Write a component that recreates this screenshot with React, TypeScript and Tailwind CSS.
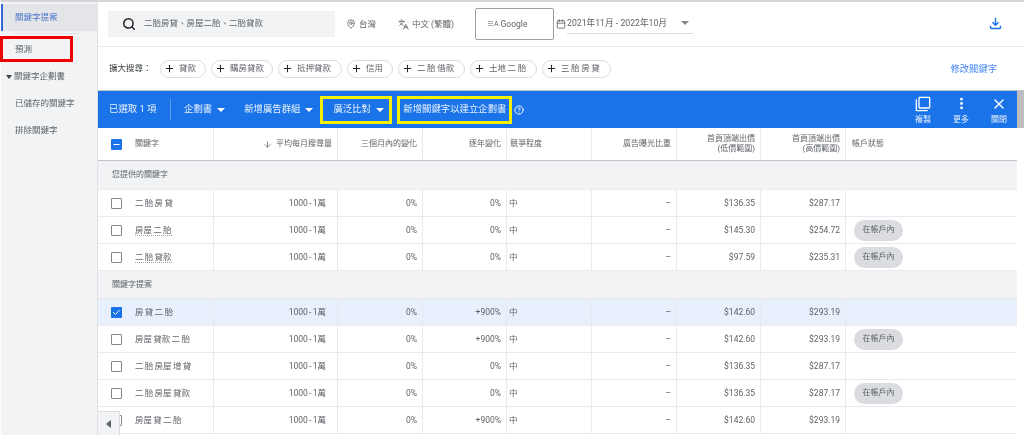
import { Search, MapPin, Languages, Calendar, Plus, ArrowDown, Check, Minus, CircleHelp, MoreVertical, X } from "lucide-react";

const cols = "grid grid-cols-[116px_124px_85px_84px_85px_85px_84px_85px_171px]";

type Row = { k: string; y: string; lo: string; hi: string; acct?: boolean; sel?: boolean; u?: boolean };

const group1: Row[] = [
  { k: "二 胎 房 貸", y: "0%", lo: "$136.35", hi: "$287.17" },
  { k: "房屋 二 胎", y: "0%", lo: "$145.30", hi: "$254.72", acct: true, u: true },
  { k: "二 胎 貸款", y: "0%", lo: "$97.59", hi: "$235.31", acct: true, u: true },
];
const group2: Row[] = [
  { k: "房 貸 二 胎", y: "+900%", lo: "$142.60", hi: "$293.19", sel: true },
  { k: "房屋 貸款 二 胎", y: "+900%", lo: "$142.60", hi: "$293.19", acct: true },
  { k: "二 胎 房屋 增 貸", y: "0%", lo: "$136.35", hi: "$287.17" },
  { k: "二 胎 房屋 貸款", y: "0%", lo: "$136.35", hi: "$287.17", acct: true },
  { k: "房屋 貸 二 胎", y: "+900%", lo: "$142.60", hi: "$293.19" },
];

const chips = [
  ["貸款", "w-[46px]"],
  ["購房貸款", "w-[62px]"],
  ["抵押貸款", "w-[64px]"],
  ["信用", "w-[46px]"],
  ["二 胎 借款", "w-[67px]"],
  ["土地 二 胎", "w-[67px]"],
  ["三 胎 房 貸", "w-[69px]"],
];

function Caret() {
  return <span className="w-0 h-0 border-x-[4px] border-x-transparent border-t-[4px] border-t-white ml-[5px]" />;
}

function Cell({ children, left }: { children?: React.ReactNode; left?: boolean }) {
  return (
    <div className={`h-full flex items-center border-r border-[#e8eaed] pr-[5px] ${left ? "justify-start pl-[2px]" : "justify-end"}`}>
      {children}
    </div>
  );
}

function DataRow({ r }: { r: Row }) {
  return (
    <div className={`${cols} h-[27px] border-b border-[#e8eaed] text-[8.5px] text-[#5f6368] items-center [word-spacing:-0.8px] ${r.sel ? "bg-[#e8f0fe]" : "bg-white"}`}>
      <div className="h-full flex items-center border-r border-[#e8eaed] pl-[13px]">
        {r.sel ? (
          <span className="w-[11px] h-[11px] rounded-[1px] bg-[#1a73e8] flex items-center justify-center">
            <Check size={9} strokeWidth={2.5} className="text-white" />
          </span>
        ) : (
          <span className="w-[11px] h-[11px] rounded-[1px] border-[1.5px] border-[#80868b]" />
        )}
        <span className={`ml-[13px] whitespace-nowrap ${r.u ? "border-b border-dotted border-[#9aa0a6] leading-[10px]" : ""}`}>{r.k}</span>
      </div>
      <div className="h-full flex items-center justify-end border-r border-[#e8eaed] pr-[11px]">1000 - 1萬</div>
      <Cell>0%</Cell>
      <Cell>{r.y}</Cell>
      <Cell left>中</Cell>
      <Cell>–</Cell>
      <Cell>{r.lo}</Cell>
      <Cell>{r.hi}</Cell>
      <div className="h-full flex items-center pl-[8px]">
        {r.acct && (
          <span className="h-[21px] w-[49px] rounded-full bg-[#dadce0] flex items-center justify-center text-[8px] text-[#5f6368]">在帳戶內</span>
        )}
      </div>
    </div>
  );
}

function Section({ t, h }: { t: string; h: string }) {
  return (
    <div className={`${h} bg-[#f1f3f4] border-b border-[#e8eaed] flex items-center pl-[14px] text-[8px] text-[#5f6368]`}>{t}</div>
  );
}

function Head({ children, left }: { children: React.ReactNode; left?: boolean }) {
  return (
    <div className={`h-full flex items-center border-r border-[#e8eaed] pr-[5px] leading-[10px] ${left ? "justify-start pl-[3px]" : "justify-end text-right"}`}>
      {children}
    </div>
  );
}

function Action({ icon, label }: { icon: React.ReactNode; label: string }) {
  return (
    <div className="w-[38px] flex flex-col items-center text-white">
      <div className="h-[18px] flex items-center justify-center">{icon}</div>
      <span className="text-[8px] mt-[2px] leading-[10px] opacity-90">{label}</span>
    </div>
  );
}

export default function App() {
  return (
    <div className="w-[1024px] h-[435px] overflow-hidden bg-white flex blur-[0.45px] font-['Roboto','Noto_Sans_CJK_TC',sans-serif]">
      <aside className="w-[98px] shrink-0 h-full bg-[#f1f3f4] border-l border-l-white border-r border-r-[#e0e2e5] border-t-[2px] border-t-[#d4d5d7] pt-[2px] text-[8.5px] text-[#5f6368]">
        <div className="h-[27px] bg-[#e3e5e8] border-l-[2px] border-[#3367d6] flex items-center pl-[12px] text-[#4a76c8]">關鍵字提案</div>
        <div className="mt-[2px] ml-[12px] mr-[16px] h-px bg-[#e3e5e8]" />
        <div className="mt-[2px] -ml-px w-[73px] h-[26px] border-[3px] border-[#f00000] flex items-center pl-[12px]">預測</div>
        <div className="mt-[1px] h-[27px] flex items-center pl-[5px]">
          <span className="w-0 h-0 border-x-[3.5px] border-x-transparent border-t-[4px] border-t-[#3c4043] mr-[2px]" />
          關鍵字企劃書
        </div>
        <div className="h-[27px] flex items-center pl-[14px]">已儲存的關鍵字</div>
        <div className="h-[26px] flex items-center pl-[14px]">排除關鍵字</div>
      </aside>

      <main className="flex-1 min-w-0 relative flex flex-col">
        <div className="h-[47px] border-t-[2px] border-t-[#d4d5d7] border-b border-b-[#e8eaed] flex items-center pl-[10px] text-[8.5px] text-[#5f6368]">
          <div className="w-[227px] h-[26px] bg-[#f1f3f4] flex items-center pl-[14px] -mt-px">
            <Search size={14} strokeWidth={2.5} className="text-[#202124]" />
            <span className="ml-[8px]">二胎房貸、房屋二胎、二胎貸款</span>
          </div>
          <MapPin size={10} className="ml-[11px]" />
          <span className="ml-[3px]">台灣</span>
          <Languages size={11} className="ml-[22px]" />
          <span className="ml-[3px]">中文 (繁體)</span>
          <div className="ml-[21px] w-[79px] h-[32px] border border-[#9aa0a6] rounded-[2px] flex items-center pl-[11px]">
            <span className="text-[7px] mr-[2px]">≡A</span>Google
          </div>
          <Calendar size={10} className="ml-[2px]" />
          <div className="ml-[1px] w-[126px] h-[20px] border-b border-[#dadce0] flex items-center relative">
            <span className="text-[8.7px]">2021年11月 - 2022年10月</span>
            <span className="absolute right-[4px] top-[7px] w-0 h-0 border-x-[4px] border-x-transparent border-t-[4px] border-t-[#80868b]" />
          </div>
          <svg viewBox="0 0 24 24" className="ml-[294px] -mt-[1px] w-[17px] h-[17px] fill-[#1a73e8]">
            <path d="M18 15v3H6v-3H4v3c0 1.1.9 2 2 2h12c1.1 0 2-.9 2-2v-3h-2zm-1-4l-1.41-1.41L13 12.17V4h-2v8.17L8.41 9.59 7 11l5 5 5-5z" />
          </svg>
        </div>

        <div className="h-[43px] flex items-center pl-[11px] pr-[27px] text-[8.5px] text-[#5f6368] [word-spacing:-0.5px]">
          <span className="w-[51px] text-[#3c4043]">擴大搜尋：</span>
          <div className="flex gap-[5px]">
            {chips.map(([t, w]) => (
              <span key={t} className={`${w} h-[18px] rounded-full border border-[#dadce0] flex items-center pl-[2.5px] whitespace-nowrap`}>
                <Plus size={11} strokeWidth={2.2} className="text-[#202124] mr-[4.5px] shrink-0" />
                {t}
              </span>
            ))}
          </div>
          <span className="ml-auto text-[9.3px] text-[#4285f4]">修改關鍵字</span>
        </div>

        <div className="flex h-[38px] border-t border-[#c5c7ca]">
          <div className="w-[919px] bg-[#1a73e8] flex items-center pl-[11px] text-[9.4px] text-white/90">
            <span className="w-[61px] whitespace-nowrap">已選取 1 項</span>
            <span className="w-px h-[21px] bg-white/30" />
            <span className="ml-[13px]">企劃書</span>
            <Caret />
            <span className="ml-[19px]">新增廣告群組</span>
            <Caret />
            <div className="ml-[7px] w-[72px] h-[28px] border-[3px] border-[#f4f000] flex items-center pl-[10px] shrink-0">
              廣泛比對
              <Caret />
            </div>
            <div className="ml-[5px] w-[115px] h-[28px] border-[3px] border-[#f4f000] flex items-center justify-center whitespace-nowrap shrink-0">新增關鍵字以建立企劃書</div>
            <CircleHelp size={10} strokeWidth={2.4} className="ml-[2px]" />
            <div className="ml-auto -mr-px flex">
              <Action
                icon={
                  <svg viewBox="0 0 24 24" className="w-[16px] h-[16px] fill-white">
                    <path d="M3 5H1v16c0 1.1.9 2 2 2h16v-2H3V5zm18-4H7c-1.1 0-2 .9-2 2v14c0 1.1.9 2 2 2h14c1.1 0 2-.9 2-2V3c0-1.1-.9-2-2-2zm0 16H7V3h14v14z" />
                  </svg>
                }
                label="複製"
              />
              <Action icon={<MoreVertical size={15} strokeWidth={2.5} />} label="更多" />
              <Action icon={<X size={16} strokeWidth={2} />} label="關閉" />
            </div>
          </div>
          <div className="flex-1 bg-[#bdbdbd]" />
        </div>

        <div className="w-[919px]">
          <div className={`${cols} h-[33px] border-b border-[#c4c6c9] text-[8px] text-[#5f6368] bg-white`}>
            <div className="h-full flex items-center border-r border-[#e8eaed] pl-[13px]">
              <span className="w-[11px] h-[11px] rounded-[1px] bg-[#1a73e8] flex items-center justify-center">
                <Minus size={9} strokeWidth={3} className="text-white" />
              </span>
              <span className="ml-[13px]">關鍵字</span>
            </div>
            <Head>
              <ArrowDown size={9} className="mr-[4px]" />
              平均每月搜尋量
            </Head>
            <Head>三個月內的變化</Head>
            <Head>逐年變化</Head>
            <Head left>競爭程度</Head>
            <Head>廣告曝光比重</Head>
            <Head>首頁頂端出價<br />(低價範圍)</Head>
            <Head>首頁頂端出價<br />(高價範圍)</Head>
            <div className="h-full flex items-center pl-[6px]">帳戶狀態</div>
          </div>
          <Section t="您提供的關鍵字" h="h-[29px]" />
          {group1.map((r) => <DataRow key={r.k} r={r} />)}
          <Section t="關鍵字提案" h="h-[28px]" />
          {group2.map((r) => <DataRow key={r.k} r={r} />)}
        </div>

        <div className="absolute left-0 bottom-0 w-[22px] h-[24px] bg-[#f1f3f4] border-t border-r border-[#dadce0] flex items-center justify-center">
          <span className="w-0 h-0 border-y-[4px] border-y-transparent border-r-[5px] border-r-[#5f6368]" />
        </div>
      </main>
    </div>
  );
}
